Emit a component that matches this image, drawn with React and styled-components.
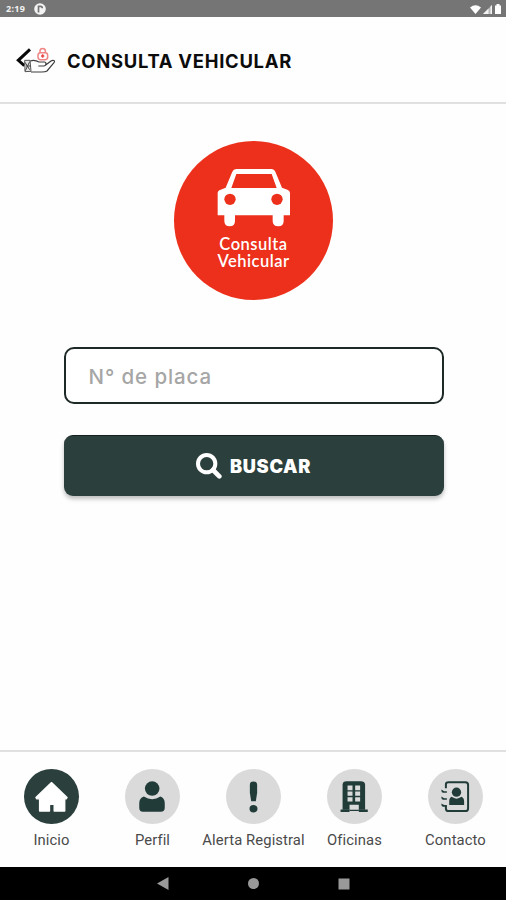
import React from 'react'
import styled, { createGlobalStyle } from 'styled-components'

const theme = {
    red: '#ec301b',
    dark: '#2b3f3c',
    icon: '#213c38',
    grey: '#dadada',
    line: '#e0e0e0',
    statusBar: '#757575'
}

const GlobalStyle = createGlobalStyle`
    * {
        box-sizing: border-box;
    }

    body {
        margin: 0;
        background: #fff;
    }
`

const Screen = styled.div`
    display: flex;
    flex-direction: column;
    width: 506px;
    height: 900px;
    overflow: hidden;
    background: #fefefe;
    font-family: Inter, 'Open Sans', sans-serif;
`

const StatusBar = styled.div`
    display: flex;
    align-items: center;
    height: 17px;
    padding: 1px 4px 0 6px;
    background: ${theme.statusBar};
    color: #f2f2f2;
    font: 700 9px/16px 'Open Sans', sans-serif;
    letter-spacing: 0.3px;
`

const StatusIcons = styled.div`
    display: flex;
    align-items: center;
    gap: 2px;
    margin-left: auto;
`

const Clock = styled.span`
    width: 28px;
    white-space: nowrap;
`

const Icon = styled.svg`
    display: block;
    flex: none;
    width: ${props => props.$width}px;
    height: ${props => props.$height}px;
`

const Header = styled.header`
    display: flex;
    align-items: center;
    height: 87px;
    padding: 1px 0 0 15px;
    border-bottom: 2px solid ${theme.line};
`

const Title = styled.h1`
    margin: 1px 0 0 11px;
    color: #0c0c0c;
    font-size: 18.4px;
    line-height: 24px;
    font-weight: 700;
    letter-spacing: 0.73px;
    white-space: nowrap;
`

const Content = styled.main`
    display: flex;
    flex-direction: column;
    align-items: center;
    flex: 1;
    padding: 37px 0 0 1px;
`

const Badge = styled.div`
    display: flex;
    flex-direction: column;
    align-items: center;
    width: 159px;
    height: 159px;
    padding-top: 27px;
    border-radius: 50%;
    background: ${theme.red};
`

const BadgeLabel = styled.div`
    margin-top: 8px;
    color: #fff;
    font: 600 16.5px/17px Lato, sans-serif;
    letter-spacing: 0.5px;
    text-align: center;
`

const PlateInput = styled.input`
    width: 380px;
    height: 57px;
    margin-top: 47px;
    padding: 2px 23px 0;
    border: 2px solid #1d2927;
    border-radius: 10px;
    outline: none;
    background: #fff;
    font: 500 20.5px Inter, sans-serif;
    letter-spacing: 0.9px;

    &::placeholder {
        color: #a6a6a6;
        opacity: 1;
    }
`

const SearchButton = styled.button`
    display: flex;
    align-items: center;
    justify-content: center;
    gap: 8px;
    width: 380px;
    height: 61px;
    margin-top: 31px;
    padding: 0 0 1px;
    border: 0;
    border-top: 1px solid #14211f;
    border-radius: 9px;
    background: ${theme.dark};
    box-shadow: 0 3px 4px rgba(0, 0, 0, 0.25);
    color: #fff;
    font: 900 18.2px/24px Inter, sans-serif;
    letter-spacing: 0.7px;
`

const TabBar = styled.nav`
    display: grid;
    grid-template-columns: repeat(5, minmax(0, 1fr));
    height: 117px;
    padding: 17px 0 0 1px;
    border-top: 2px solid ${theme.line};
`

const Tab = styled.div`
    display: flex;
    flex-direction: column;
    align-items: center;
`

const TabCircle = styled.div`
    width: 55px;
    height: 55px;
    border-radius: 50%;
    background: ${props => props.$active ? theme.dark : theme.grey};
    color: ${props => props.$active ? '#fff' : theme.icon};
`

const TabLabel = styled.span`
    margin-top: 6px;
    color: #4a4a4a;
    font: 400 14.8px/20px Roboto, sans-serif;
    letter-spacing: 0.1px;
    white-space: nowrap;
`

const AndroidBar = styled.div`
    display: flex;
    align-items: center;
    justify-content: center;
    gap: 79px;
    height: 33px;
    background: #000;
`

const BackLogo = () => (
    <Icon $width={41} $height={30} viewBox="0 0 123 90" fill="none">
        <path d="M45 13 L10 46 L28 62" stroke="#080808" strokeWidth="9" />
        <path d="M29 46 L45 46 L48 79 L30 80 Z" fill="#e4e4e4" stroke="#555" strokeWidth="3" />
        <path d="M30 52 L44 74 M44 50 L31 77 M33 63 H46" stroke="#444" strokeWidth="3" />
        <path
            d="M46 48 C57 44 65 47 72 51 H89 C95 53 94 61 87 63 H70 M89 62 L108 48 C114 44 122 47 117 53 L96 78 C92 81 86 81 80 81 H48"
            stroke="#3c3c3c" strokeWidth="3.5" />
        <rect x="69" y="23" width="29" height="21" rx="8" stroke="#f08585" strokeWidth="4.5" />
        <path d="M75 23 V18 C75 8 91 8 91 18 V23" stroke="#f08585" strokeWidth="4.5" />
        <path d="M83 28 V38 M78 33 H88" stroke="#e94848" strokeWidth="4.5" />
    </Icon>
)

const CarIcon = () => (
    <Icon $width={74} $height={60} viewBox="155 98 222 180">
        <path
            fill="#fff"
            fillRule="evenodd"
            d="M213 101 H319 Q327 101 330 109 L350 157 L366 163 Q374 165 374 173 V240 H355 V257 Q355 273 339 273 Q322 273 322 257 V240 H209 V257 Q209 273 193 273 Q177 273 177 257 V240 H157 V173 Q157 165 166 163 L181 157 L201 109 Q204 101 213 101 Z M213 116 L198 158 H334 L319 116 Z" />
        <circle cx="194" cy="192" r="17" fill={theme.red} />
        <circle cx="335" cy="192" r="17" fill={theme.red} />
    </Icon>
)

const SearchIcon = () => (
    <Icon $width={26} $height={26} viewBox="0 0 78 78" fill="none" stroke="#fff">
        <circle cx="32" cy="32" r="26" strokeWidth="12" />
        <path d="M51 51 L70 70" strokeWidth="14" strokeLinecap="round" />
    </Icon>
)

const TabIcon = ({ children }) => (
    <Icon $width={55} $height={55} viewBox="1 1 166 166" fill="currentColor">
        {children}
    </Icon>
)

const tabs = [
    {
        label: 'Inicio',
        active: true,
        icon: <path stroke="currentColor" strokeWidth="4" strokeLinejoin="round" d="M84 42 L131 87 L129 91 H124 V128 H92 V108 H78 V128 H48 V91 H39 L37 87 Z" />
    },
    {
        label: 'Perfil',
        icon: (
            <>
                <circle cx="83" cy="60" r="22" />
                <path d="M58 84 Q83 100 108 84 Q121 88 121 105 V118 Q121 130 109 130 H55 Q44 130 44 118 V105 Q44 88 58 84 Z" />
            </>
        )
    },
    {
        label: 'Alerta Registral',
        icon: (
            <>
                <path d="M73 49 Q73 39 84 39 Q95 39 95 49 V73 L91 98 H77 L73 73 Z" />
                <ellipse cx="84" cy="121" rx="12" ry="11" />
            </>
        )
    },
    {
        label: 'Oficinas',
        icon: (
            <>
                <path
                    fillRule="evenodd"
                    d="M48 48 Q49 38 60 38 H103 Q115 38 116 48 V124 H48 Z M63 51 V65 H78 V51 Z M86 51 V65 H101 V51 Z M63 69 V82 H78 V69 Z M86 69 V82 H101 V69 Z M63 86 V99 H78 V86 Z M86 86 V99 H101 V86 Z M69 109 V128 H97 V109 Z" />
                <path d="M42 123 H69 V131 H42 Z M97 123 H124 V131 H97 Z" />
            </>
        )
    },
    {
        label: 'Contacto',
        icon: (
            <>
                <path
                    fill="none" stroke="currentColor" strokeWidth="6"
                    d="M55 59 V48 Q55 41 63 41 H114 Q122 41 122 49 V120 Q122 128 114 128 H63 Q55 128 55 120 V113" />
                <path d="M41 63 L50 68 H58 V73 H46 Q41 71 41 63 Z M41 84 L50 89 H58 V94 H46 Q41 92 41 84 Z M41 105 L50 110 H58 V115 H46 Q41 113 41 105 Z" />
                <circle cx="87" cy="71" r="14" />
                <path d="M72 85 Q87 96 102 85 Q110 88 110 99 V110 H65 V99 Q65 88 72 85 Z" />
            </>
        )
    }
]

const App = () => {
    return (
        <Screen>
            <GlobalStyle />
            <StatusBar>
                <Clock>2:19</Clock>
                <Icon $width={12} $height={12} viewBox="0 0 12 12">
                    <circle cx="6" cy="6" r="5.8" fill="#f4f4f4" />
                    <path d="M4.5 9.5 V3.4 H6.7 Q8.3 3.4 8.3 5.2" fill="none" stroke={theme.statusBar} strokeWidth="1.7" />
                </Icon>
                <StatusIcons>
                    <Icon $width={11} $height={9} viewBox="0 0 11 9">
                        <path d="M0 2.4 Q5.5 -2 11 2.4 L5.5 9 Z" fill="#fff" />
                    </Icon>
                    <Icon $width={9} $height={9} viewBox="0 0 9 9">
                        <path d="M9 0 V9 H0 Z" fill="#b9b9b9" />
                        <path d="M5.5 3.5 V9 H0 Z M7.5 1.5 L9 0 V9 H7.5 Z" fill="#f2f2f2" />
                    </Icon>
                    <Icon $width={8} $height={10} viewBox="0 0 8 10">
                        <path d="M1 1.4 H2.5 V0 H5.5 V1.4 H7 V10 H1 Z" fill="#fff" />
                    </Icon>
                </StatusIcons>
            </StatusBar>
            <Header>
                <BackLogo />
                <Title>CONSULTA VEHICULAR</Title>
            </Header>
            <Content>
                <Badge>
                    <CarIcon />
                    <BadgeLabel>Consulta<br />Vehicular</BadgeLabel>
                </Badge>
                <PlateInput placeholder="N° de placa" />
                <SearchButton>
                    <SearchIcon />
                    BUSCAR
                </SearchButton>
            </Content>
            <TabBar>
                {
                    tabs.map(tab =>
                        <Tab key={tab.label}>
                            <TabCircle $active={tab.active}>
                                <TabIcon>{tab.icon}</TabIcon>
                            </TabCircle>
                            <TabLabel>{tab.label}</TabLabel>
                        </Tab>
                    )
                }
            </TabBar>
            <AndroidBar>
                <Icon $width={12} $height={13} viewBox="0 0 12 13">
                    <path d="M0 6.5 L11.5 0 V13 Z" fill="#999" />
                </Icon>
                <Icon $width={11} $height={11} viewBox="0 0 11 11">
                    <circle cx="5.5" cy="5.5" r="5.5" fill="#999" />
                </Icon>
                <Icon $width={12} $height={12} viewBox="0 0 12 12">
                    <rect x="0.5" y="0.5" width="11" height="11" fill="#999" />
                </Icon>
            </AndroidBar>
        </Screen>
    )
}

export default App
